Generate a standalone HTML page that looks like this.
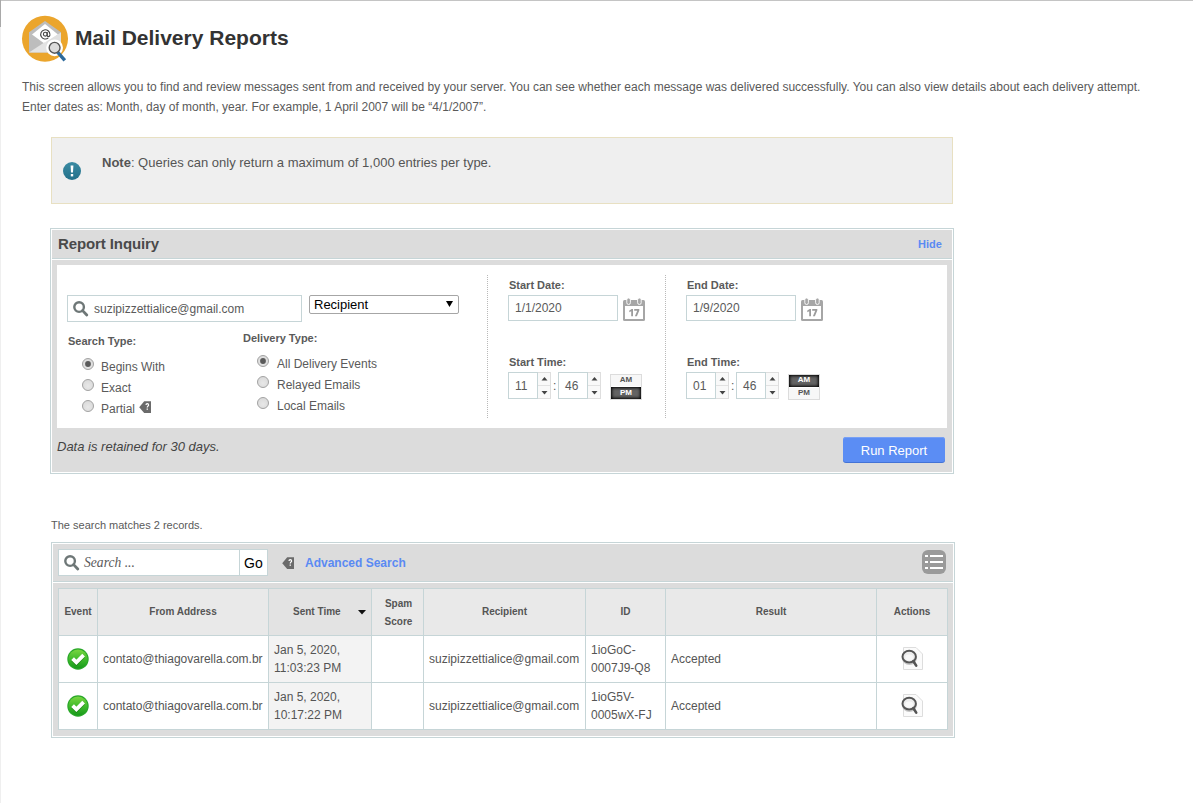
<!DOCTYPE html>
<html><head><meta charset="utf-8"><style>
html,body{margin:0;padding:0;background:#fff;width:1193px;height:803px;overflow:hidden;position:relative}
.t{position:absolute;white-space:nowrap}
.b{position:absolute;display:block}
</style></head><body>
<div class="b" style="left:0px;top:0px;width:1193px;height:1px;background:#c4c4c4"></div>
<div class="b" style="left:0px;top:0px;width:1px;height:27px;background:#a9a9a9"></div>
<div class="b" style="left:0px;top:27px;width:1px;height:776px;background:#efefef"></div>
<svg class="b" style="left:20px;top:13px" width="52" height="52" viewBox="0 0 52 52">
<circle cx="25" cy="25.8" r="23" fill="#eba52c"/>
<path d="M9 19.2 L25 8 L41 19.2 L41 39.5 L9 39.5 Z" fill="#bdbdbd"/>
<path d="M12 21.5 L25 11 L38 21.5 L25 31 Z" fill="#fff"/>
<path d="M9 39.5 L25 29 L41 39.5 Z" fill="#e3e3e3"/>
<path d="M41 19.5 L41 39.5 L25 29.2 L38 21.3 Z" fill="#e0e0e0"/>
<path d="M12 21.5 L25 31 L38 21.5 L41 19.5 L41 20.5 L25 31.5 L9 20.5 Z" fill="#fff" opacity="0.0"/>
<circle cx="25.3" cy="21.2" r="1.9" fill="none" stroke="#444" stroke-width="1.1"/>
<path d="M29.9 21.4 A4.6 4.6 0 1 0 28.3 24.9" fill="none" stroke="#444" stroke-width="1.1"/>
<path d="M27.2 19 V22.3 Q27.2 23.6 28.4 23.6 Q29.9 23.6 29.9 21.4" fill="none" stroke="#444" stroke-width="1.1"/>
<circle cx="34.6" cy="34.8" r="8.4" fill="#fff"/>
<line x1="37.6" y1="39.2" x2="44.8" y2="47.3" stroke="#2d6a9c" stroke-width="3.4" stroke-linecap="butt"/>
<circle cx="34.6" cy="34.8" r="5.4" fill="#dcdcdc" stroke="#555" stroke-width="1.4"/>
</svg>
<div class="t" style="left:75px;top:27px;font:normal bold 21px/1 'Liberation Sans';color:#333;">Mail Delivery Reports</div>
<div class="t" style="left:22px;top:81px;font:normal normal 12px/1 'Liberation Sans';color:#5a5a5a;">This screen allows you to find and review messages sent from and received by your server. You can see whether each message was delivered successfully. You can also view details about each delivery attempt.</div>
<div class="t" style="left:22px;top:101px;font:normal normal 12px/1 'Liberation Sans';color:#5a5a5a;">Enter dates as: Month, day of month, year. For example, 1 April 2007 will be &#8220;4/1/2007&#8221;.</div>
<div class="b" style="left:51px;top:137px;width:902px;height:67px;background:#efefef;border:1px solid #e8e0c2;box-sizing:border-box"></div>
<svg class="b" style="left:62px;top:161px" width="20" height="20" viewBox="0 0 20 20"><defs><linearGradient id="ng" x1="0" y1="0" x2="0" y2="1"><stop offset="0" stop-color="#3b8ba3"/><stop offset="1" stop-color="#23708a"/></linearGradient></defs>
<circle cx="10" cy="10" r="9" fill="url(#ng)"/>
<path d="M8.6 4.5 H11.4 L11 11.5 H9 Z" fill="#fff"/><rect x="8.8" y="13" width="2.4" height="2.4" fill="#fff"/></svg>
<div class="t" style="left:102px;top:156px;font:13px/1 'Liberation Sans';color:#555"><b>Note</b>: Queries can only return a maximum of 1,000 entries per type.</div>
<div class="b" style="left:50px;top:228px;width:904px;height:246px;border:1px solid #c6d5d7;box-sizing:border-box;background:#fff"></div>
<div class="b" style="left:52px;top:230px;width:900px;height:242px;background:#dcdcdc"></div>
<div class="b" style="left:52px;top:258px;width:900px;height:1px;background:#c6d5d7"></div>
<div class="b" style="left:52px;top:259px;width:900px;height:1px;background:#fff"></div>
<div class="t" style="left:58px;top:236px;font:normal bold 15px/1 'Liberation Sans';color:#4a4a4a;letter-spacing:-0.1px">Report Inquiry</div>
<div class="t" style="left:918px;top:239px;font:normal bold 11px/1 'Liberation Sans';color:#5a8af3;">Hide</div>
<div class="b" style="left:57px;top:265px;width:890px;height:163px;background:#fff"></div>
<div class="b" style="left:67px;top:295px;width:235px;height:27px;border:1px solid #c6d5d7;box-sizing:border-box;background:#fff"></div>
<svg class="b" style="left:73px;top:301px" width="16" height="16" viewBox="0 0 16 16"><circle cx="6.1" cy="6.1" r="4.8" fill="none" stroke="#6e7777" stroke-width="2.4"/><line x1="9.6" y1="9.6" x2="13.8" y2="14" stroke="#6e7777" stroke-width="2.8" stroke-linecap="round"/></svg>
<div class="t" style="left:94px;top:304px;font:normal normal 12px/1 'Liberation Sans';color:#5a5a5a;top:303px">suzipizzettialice@gmail.com</div>
<div class="b" style="left:309px;top:295px;width:150px;height:19px;border:1px solid #a6a6a6;border-radius:2px;box-sizing:border-box;background:#fff"></div>
<div class="t" style="left:314px;top:298px;font:normal normal 13px/1 'Liberation Sans';color:#000;">Recipient</div>
<svg class="b" style="left:446px;top:301px" width="7" height="6" viewBox="0 0 7 6"><path d="M0 0 H7 L3.5 6 Z" fill="#000"/></svg>
<div class="t" style="left:68px;top:336px;font:normal bold 11px/1 'Liberation Sans';color:#5a5a5a;">Search Type:</div>
<svg class="b" style="left:81px;top:357px" width="14" height="14" viewBox="0 0 14 14"><defs><radialGradient id="rg88364" cx="0.5" cy="0.6" r="0.6"><stop offset="0" stop-color="#e8e8e8"/><stop offset="1" stop-color="#d9d9d9"/></radialGradient></defs>
<circle cx="7" cy="7" r="5.5" fill="url(#rg88364)" stroke="#a3a3a3" stroke-width="1"/><circle cx="7" cy="7" r="2.9" fill="#5a5a5a"/></svg>
<svg class="b" style="left:81px;top:378px" width="14" height="14" viewBox="0 0 14 14"><defs><radialGradient id="rg88385" cx="0.5" cy="0.6" r="0.6"><stop offset="0" stop-color="#e8e8e8"/><stop offset="1" stop-color="#d9d9d9"/></radialGradient></defs>
<circle cx="7" cy="7" r="5.5" fill="url(#rg88385)" stroke="#a3a3a3" stroke-width="1"/></svg>
<svg class="b" style="left:81px;top:399px" width="14" height="14" viewBox="0 0 14 14"><defs><radialGradient id="rg88406" cx="0.5" cy="0.6" r="0.6"><stop offset="0" stop-color="#e8e8e8"/><stop offset="1" stop-color="#d9d9d9"/></radialGradient></defs>
<circle cx="7" cy="7" r="5.5" fill="url(#rg88406)" stroke="#a3a3a3" stroke-width="1"/></svg>
<div class="t" style="left:101px;top:361px;font:normal normal 12px/1 'Liberation Sans';color:#5a5a5a;">Begins With</div>
<div class="t" style="left:101px;top:382px;font:normal normal 12px/1 'Liberation Sans';color:#5a5a5a;">Exact</div>
<div class="t" style="left:101px;top:403px;font:normal normal 12px/1 'Liberation Sans';color:#5a5a5a;">Partial</div>
<svg class="b" style="left:139px;top:401px" width="12" height="12" viewBox="0 0 12 12"><path d="M0.2 6.2 L5.2 0.3 H12 V12 H5.2 Z" fill="#6b6b6b"/><path d="M6.4 4.1 Q6.4 2.1 8.3 2.1 Q10.2 2.1 10.2 3.9 Q10.2 5 9.3 5.6 Q8.9 5.9 8.9 6.6 H7.6 Q7.6 5.4 8.3 4.9 Q8.9 4.5 8.9 3.9 Q8.9 3.3 8.3 3.3 Q7.7 3.3 7.7 4.1 Z" fill="#fff"/><rect x="7.6" y="7.5" width="1.3" height="1.3" fill="#fff"/></svg>
<div class="t" style="left:243px;top:333px;font:normal bold 11px/1 'Liberation Sans';color:#5a5a5a;">Delivery Type:</div>
<svg class="b" style="left:256px;top:354px" width="14" height="14" viewBox="0 0 14 14"><defs><radialGradient id="rg263361" cx="0.5" cy="0.6" r="0.6"><stop offset="0" stop-color="#e8e8e8"/><stop offset="1" stop-color="#d9d9d9"/></radialGradient></defs>
<circle cx="7" cy="7" r="5.5" fill="url(#rg263361)" stroke="#a3a3a3" stroke-width="1"/><circle cx="7" cy="7" r="2.9" fill="#5a5a5a"/></svg>
<svg class="b" style="left:256px;top:375px" width="14" height="14" viewBox="0 0 14 14"><defs><radialGradient id="rg263382" cx="0.5" cy="0.6" r="0.6"><stop offset="0" stop-color="#e8e8e8"/><stop offset="1" stop-color="#d9d9d9"/></radialGradient></defs>
<circle cx="7" cy="7" r="5.5" fill="url(#rg263382)" stroke="#a3a3a3" stroke-width="1"/></svg>
<svg class="b" style="left:256px;top:396px" width="14" height="14" viewBox="0 0 14 14"><defs><radialGradient id="rg263403" cx="0.5" cy="0.6" r="0.6"><stop offset="0" stop-color="#e8e8e8"/><stop offset="1" stop-color="#d9d9d9"/></radialGradient></defs>
<circle cx="7" cy="7" r="5.5" fill="url(#rg263403)" stroke="#a3a3a3" stroke-width="1"/></svg>
<div class="t" style="left:277px;top:358px;font:normal normal 12px/1 'Liberation Sans';color:#5a5a5a;">All Delivery Events</div>
<div class="t" style="left:277px;top:379px;font:normal normal 12px/1 'Liberation Sans';color:#5a5a5a;">Relayed Emails</div>
<div class="t" style="left:277px;top:400px;font:normal normal 12px/1 'Liberation Sans';color:#5a5a5a;">Local Emails</div>
<div class="b" style="left:487px;top:275px;width:0;height:143px;border-left:1px dotted #b9b9b9"></div>
<div class="b" style="left:665px;top:275px;width:0;height:143px;border-left:1px dotted #b9b9b9"></div>
<div class="t" style="left:509px;top:280px;font:normal bold 11px/1 'Liberation Sans';color:#5a5a5a;">Start Date:</div>
<div class="b" style="left:508px;top:295px;width:110px;height:26px;border:1px solid #c6d5d7;box-sizing:border-box;background:#fff"></div>
<div class="t" style="left:515px;top:302px;font:normal normal 12px/1 'Liberation Sans';color:#5a5a5a;">1/1/2020</div>
<svg class="b" style="left:623px;top:298px" width="22" height="23" viewBox="0 0 22 23"><path d="M0 3.5 Q0 2 1.5 2 H20.5 Q22 2 22 3.5 V21.5 Q22 23 20.5 23 H1.5 Q0 23 0 21.5 Z" fill="#a6a6a6"/>
<rect x="2" y="8" width="18" height="13" fill="#fff"/>
<rect x="3.8" y="0" width="3.6" height="6.5" rx="1.8" fill="#a6a6a6" stroke="#fff" stroke-width="0.9"/>
<rect x="14.6" y="0" width="3.6" height="6.5" rx="1.8" fill="#a6a6a6" stroke="#fff" stroke-width="0.9"/>
<path d="M6.3 12.4 L8.7 11 H10 V18.2 H8.2 V13.3 L6.3 14.2 Z" fill="#9c9c9c"/>
<path d="M11.2 11 H16.3 V12.5 L13.9 18.2 H11.9 L14.2 12.7 H11.2 Z" fill="#9c9c9c"/></svg>
<div class="t" style="left:509px;top:357px;font:normal bold 11px/1 'Liberation Sans';color:#5a5a5a;">Start Time:</div>
<div class="b" style="left:508px;top:372px;width:30px;height:27px;border:1px solid #c6d5d7;box-sizing:border-box;background:#fff"></div>
<div class="b" style="left:538px;top:372px;width:13px;height:27px;border:1px solid #dedede;border-left:0;box-sizing:border-box;background:#f9f9f9"></div>
<div class="b" style="left:538px;top:385px;width:12px;height:1px;background:#e2e2e2"></div>
<svg class="b" style="left:541px;top:377px" width="7" height="4" viewBox="0 0 7 4"><path d="M0.5 3.5 L3.5 0 L6.5 3.5 Z" fill="#444"/></svg>
<svg class="b" style="left:541px;top:391px" width="7" height="4" viewBox="0 0 7 4"><path d="M0.5 0 L3.5 3.5 L6.5 0 Z" fill="#444"/></svg>
<div class="t" style="left:515px;top:380px;font:normal normal 12px/1 'Liberation Sans';color:#5a5a5a;">11</div>
<div class="b" style="left:558px;top:372px;width:30px;height:27px;border:1px solid #c6d5d7;box-sizing:border-box;background:#fff"></div>
<div class="b" style="left:588px;top:372px;width:13px;height:27px;border:1px solid #dedede;border-left:0;box-sizing:border-box;background:#f9f9f9"></div>
<div class="b" style="left:588px;top:385px;width:12px;height:1px;background:#e2e2e2"></div>
<svg class="b" style="left:591px;top:377px" width="7" height="4" viewBox="0 0 7 4"><path d="M0.5 3.5 L3.5 0 L6.5 3.5 Z" fill="#444"/></svg>
<svg class="b" style="left:591px;top:391px" width="7" height="4" viewBox="0 0 7 4"><path d="M0.5 0 L3.5 3.5 L6.5 0 Z" fill="#444"/></svg>
<div class="t" style="left:565px;top:380px;font:normal normal 12px/1 'Liberation Sans';color:#5a5a5a;">46</div>
<div class="t" style="left:553px;top:380px;font:normal normal 12px/1 'Liberation Sans';color:#5a5a5a;">:</div>
<div class="b" style="left:610px;top:374px;width:32px;height:26px;background:#f7f7f7;border:1px solid #dcdcdc;box-sizing:border-box"></div>
<div class="b" style="left:611px;top:386px;width:30px;height:1px;background:#fff"></div>
<div class="b" style="left:611px;top:387px;width:30px;height:12px;background:#636363;box-shadow:inset 0 0 3px 1px #000"></div>
<div class="t" style="left:610px;top:376px;width:32px;text-align:center;font:bold 8px/1 'Liberation Sans';color:#555">AM</div>
<div class="t" style="left:610px;top:389px;width:32px;text-align:center;font:bold 8px/1 'Liberation Sans';color:#fff">PM</div>
<div class="t" style="left:687px;top:280px;font:normal bold 11px/1 'Liberation Sans';color:#5a5a5a;">End Date:</div>
<div class="b" style="left:686px;top:295px;width:110px;height:26px;border:1px solid #c6d5d7;box-sizing:border-box;background:#fff"></div>
<div class="t" style="left:693px;top:302px;font:normal normal 12px/1 'Liberation Sans';color:#5a5a5a;">1/9/2020</div>
<svg class="b" style="left:801px;top:298px" width="22" height="23" viewBox="0 0 22 23"><path d="M0 3.5 Q0 2 1.5 2 H20.5 Q22 2 22 3.5 V21.5 Q22 23 20.5 23 H1.5 Q0 23 0 21.5 Z" fill="#a6a6a6"/>
<rect x="2" y="8" width="18" height="13" fill="#fff"/>
<rect x="3.8" y="0" width="3.6" height="6.5" rx="1.8" fill="#a6a6a6" stroke="#fff" stroke-width="0.9"/>
<rect x="14.6" y="0" width="3.6" height="6.5" rx="1.8" fill="#a6a6a6" stroke="#fff" stroke-width="0.9"/>
<path d="M6.3 12.4 L8.7 11 H10 V18.2 H8.2 V13.3 L6.3 14.2 Z" fill="#9c9c9c"/>
<path d="M11.2 11 H16.3 V12.5 L13.9 18.2 H11.9 L14.2 12.7 H11.2 Z" fill="#9c9c9c"/></svg>
<div class="t" style="left:687px;top:357px;font:normal bold 11px/1 'Liberation Sans';color:#5a5a5a;">End Time:</div>
<div class="b" style="left:686px;top:372px;width:30px;height:27px;border:1px solid #c6d5d7;box-sizing:border-box;background:#fff"></div>
<div class="b" style="left:716px;top:372px;width:13px;height:27px;border:1px solid #dedede;border-left:0;box-sizing:border-box;background:#f9f9f9"></div>
<div class="b" style="left:716px;top:385px;width:12px;height:1px;background:#e2e2e2"></div>
<svg class="b" style="left:719px;top:377px" width="7" height="4" viewBox="0 0 7 4"><path d="M0.5 3.5 L3.5 0 L6.5 3.5 Z" fill="#444"/></svg>
<svg class="b" style="left:719px;top:391px" width="7" height="4" viewBox="0 0 7 4"><path d="M0.5 0 L3.5 3.5 L6.5 0 Z" fill="#444"/></svg>
<div class="t" style="left:693px;top:380px;font:normal normal 12px/1 'Liberation Sans';color:#5a5a5a;">01</div>
<div class="b" style="left:736px;top:372px;width:30px;height:27px;border:1px solid #c6d5d7;box-sizing:border-box;background:#fff"></div>
<div class="b" style="left:766px;top:372px;width:13px;height:27px;border:1px solid #dedede;border-left:0;box-sizing:border-box;background:#f9f9f9"></div>
<div class="b" style="left:766px;top:385px;width:12px;height:1px;background:#e2e2e2"></div>
<svg class="b" style="left:769px;top:377px" width="7" height="4" viewBox="0 0 7 4"><path d="M0.5 3.5 L3.5 0 L6.5 3.5 Z" fill="#444"/></svg>
<svg class="b" style="left:769px;top:391px" width="7" height="4" viewBox="0 0 7 4"><path d="M0.5 0 L3.5 3.5 L6.5 0 Z" fill="#444"/></svg>
<div class="t" style="left:743px;top:380px;font:normal normal 12px/1 'Liberation Sans';color:#5a5a5a;">46</div>
<div class="t" style="left:731px;top:380px;font:normal normal 12px/1 'Liberation Sans';color:#5a5a5a;">:</div>
<div class="b" style="left:788px;top:374px;width:32px;height:26px;background:#f7f7f7;border:1px solid #dcdcdc;box-sizing:border-box"></div>
<div class="b" style="left:789px;top:375px;width:30px;height:12px;background:#636363;box-shadow:inset 0 0 3px 1px #000"></div>
<div class="b" style="left:789px;top:387px;width:30px;height:1px;background:#fff"></div>
<div class="t" style="left:788px;top:376px;width:32px;text-align:center;font:bold 8px/1 'Liberation Sans';color:#fff">AM</div>
<div class="t" style="left:788px;top:389px;width:32px;text-align:center;font:bold 8px/1 'Liberation Sans';color:#555">PM</div>
<div class="t" style="left:57px;top:440px;font:italic normal 13px/1 'Liberation Sans';color:#444;">Data is retained for 30 days.</div>
<div class="b" style="left:843px;top:437px;width:102px;height:25px;background:#5b8df4;border-radius:3px;box-shadow:0 1px 0 #4373d6, inset 0 1px 0 #77a0f5"></div>
<div class="t" style="left:843px;top:444px;width:102px;text-align:center;font:13px/1 'Liberation Sans';color:#fff">Run Report</div>
<div class="t" style="left:51px;top:520px;font:normal normal 11px/1 'Liberation Sans';color:#5a5a5a;">The search matches 2 records.</div>
<div class="b" style="left:51px;top:542px;width:904px;height:196px;border:1px solid #c6d5d7;box-sizing:border-box;background:#fff"></div>
<div class="b" style="left:53px;top:544px;width:900px;height:192px;background:#dcdcdc"></div>
<div class="b" style="left:53px;top:581px;width:900px;height:1px;background:#c6d5d7"></div>
<div class="b" style="left:53px;top:582px;width:900px;height:1px;background:#fff"></div>
<div class="b" style="left:58px;top:549px;width:210px;height:27px;border:1px solid #c6d5d7;box-sizing:border-box;background:#fff"></div>
<div class="b" style="left:239px;top:549px;width:1px;height:27px;background:#c6d5d7"></div>
<svg class="b" style="left:64px;top:555px" width="16" height="16" viewBox="0 0 16 16"><circle cx="6.1" cy="6.1" r="4.8" fill="none" stroke="#6e7777" stroke-width="2.4"/><line x1="9.6" y1="9.6" x2="13.8" y2="14" stroke="#6e7777" stroke-width="2.8" stroke-linecap="round"/></svg>
<div class="t" style="left:84px;top:556px;font:italic 13.6px/1 'Liberation Serif';color:#5a5a5a">Search ...</div>
<div class="t" style="left:244px;top:556px;font:normal normal 14px/1 'Liberation Sans';color:#000;">Go</div>
<svg class="b" style="left:282px;top:557px" width="12" height="12" viewBox="0 0 12 12"><path d="M0.2 6.2 L5.2 0.3 H12 V12 H5.2 Z" fill="#6b6b6b"/><path d="M6.4 4.1 Q6.4 2.1 8.3 2.1 Q10.2 2.1 10.2 3.9 Q10.2 5 9.3 5.6 Q8.9 5.9 8.9 6.6 H7.6 Q7.6 5.4 8.3 4.9 Q8.9 4.5 8.9 3.9 Q8.9 3.3 8.3 3.3 Q7.7 3.3 7.7 4.1 Z" fill="#fff"/><rect x="7.6" y="7.5" width="1.3" height="1.3" fill="#fff"/></svg>
<div class="t" style="left:305px;top:557px;font:normal bold 12px/1 'Liberation Sans';color:#5a8af3;">Advanced Search</div>
<svg class="b" style="left:922px;top:550px" width="24" height="24" viewBox="0 0 24 24"><rect x="0" y="0" width="24" height="24" rx="6" fill="#9a9a9a"/>
<rect x="3" y="5" width="3" height="2" fill="#fff"/><rect x="8" y="5" width="13" height="2" fill="#fff"/>
<rect x="3" y="11" width="3" height="2" fill="#fff"/><rect x="8" y="11" width="13" height="2" fill="#fff"/>
<rect x="3" y="17" width="3" height="2" fill="#fff"/><rect x="8" y="17" width="13" height="2" fill="#fff"/></svg>
<div class="b" style="left:58px;top:588px;width:890px;height:142px;background:#fff"></div>
<div class="b" style="left:59px;top:589px;width:888px;height:46px;background:#e9e9e9"></div>
<div class="b" style="left:269px;top:589px;width:102px;height:46px;background:#e3e3e3"></div>
<div class="b" style="left:269px;top:636px;width:102px;height:93px;background:#f3f3f3"></div>
<div class="b" style="left:58px;top:588px;width:1px;height:142px;background:#c6d5d7"></div>
<div class="b" style="left:97px;top:588px;width:1px;height:142px;background:#c6d5d7"></div>
<div class="b" style="left:268px;top:588px;width:1px;height:142px;background:#c6d5d7"></div>
<div class="b" style="left:371px;top:588px;width:1px;height:142px;background:#c6d5d7"></div>
<div class="b" style="left:423px;top:588px;width:1px;height:142px;background:#c6d5d7"></div>
<div class="b" style="left:585px;top:588px;width:1px;height:142px;background:#c6d5d7"></div>
<div class="b" style="left:665px;top:588px;width:1px;height:142px;background:#c6d5d7"></div>
<div class="b" style="left:876px;top:588px;width:1px;height:142px;background:#c6d5d7"></div>
<div class="b" style="left:947px;top:588px;width:1px;height:142px;background:#c6d5d7"></div>
<div class="b" style="left:58px;top:588px;width:890px;height:1px;background:#c6d5d7"></div>
<div class="b" style="left:58px;top:635px;width:890px;height:1px;background:#c6d5d7"></div>
<div class="b" style="left:58px;top:682px;width:890px;height:1px;background:#c6d5d7"></div>
<div class="b" style="left:58px;top:729px;width:890px;height:1px;background:#c6d5d7"></div>
<div class="t" style="left:59px;top:607px;width:38px;text-align:center;font:bold 10px/1 'Liberation Sans';color:#555">Event</div>
<div class="t" style="left:98px;top:607px;width:170px;text-align:center;font:bold 10px/1 'Liberation Sans';color:#555">From Address</div>
<div class="t" style="left:424px;top:607px;width:161px;text-align:center;font:bold 10px/1 'Liberation Sans';color:#555">Recipient</div>
<div class="t" style="left:586px;top:607px;width:79px;text-align:center;font:bold 10px/1 'Liberation Sans';color:#555">ID</div>
<div class="t" style="left:666px;top:607px;width:210px;text-align:center;font:bold 10px/1 'Liberation Sans';color:#555">Result</div>
<div class="t" style="left:877px;top:607px;width:70px;text-align:center;font:bold 10px/1 'Liberation Sans';color:#555">Actions</div>
<div class="t" style="left:293px;top:607px;font:bold 10px/1 'Liberation Sans';color:#555">Sent Time</div>
<svg class="b" style="left:358px;top:610px" width="8" height="5" viewBox="0 0 8 5"><path d="M0 0 H8 L4 4.5 Z" fill="#111"/></svg>
<div class="t" style="left:373px;top:595px;width:51px;text-align:center;font:bold 10px/18px 'Liberation Sans';color:#555">Spam<br>Score</div>
<svg class="b" style="left:67px;top:648px" width="22" height="22" viewBox="0 0 22 22"><defs><linearGradient id="cg0" x1="0" y1="0" x2="0" y2="1"><stop offset="0" stop-color="#7ad641"/><stop offset="0.55" stop-color="#3cb82a"/><stop offset="1" stop-color="#17991a"/></linearGradient></defs>
<circle cx="11" cy="11" r="10.7" fill="#2aa82a"/>
<circle cx="11" cy="11" r="9.6" fill="url(#cg0)"/>
<path d="M5.6 10.6 L9.4 14.4 L16.6 7.2" fill="none" stroke="#0b5e0b" stroke-opacity="0.45" stroke-width="3.8" transform="translate(0,1)"/>
<path d="M5.6 10.6 L9.4 14.4 L16.6 7.2" fill="none" stroke="#fff" stroke-width="3.8"/></svg>
<div class="t" style="left:103px;top:653px;font:12px/1 'Liberation Sans';color:#555">contato@thiagovarella.com.br</div>
<div class="t" style="left:274px;top:641px;font:12px/18px 'Liberation Sans';color:#555">Jan 5, 2020,<br>11:03:23 PM</div>
<div class="t" style="left:429px;top:653px;font:12px/1 'Liberation Sans';color:#555">suzipizzettialice@gmail.com</div>
<div class="t" style="left:591px;top:641px;font:12px/18px 'Liberation Sans';color:#555">1ioGoC-<br>0007J9-Q8</div>
<div class="t" style="left:671px;top:653px;font:12px/1 'Liberation Sans';color:#555">Accepted</div>
<svg class="b" style="left:900px;top:646px" width="24" height="24" viewBox="0 0 24 24"><path d="M3.5 1.5 H16 L22.5 8 V23.5 H3.5 Z" fill="#fbfbfb" stroke="#dddddd" stroke-width="1"/>
<ellipse cx="9.4" cy="12.2" rx="6.6" ry="6" fill="none" stroke="#c4c4c4" stroke-width="1.6"/>
<ellipse cx="9.2" cy="10.7" rx="6.7" ry="5.9" fill="#ececec" stroke="#555" stroke-width="2"/>
<ellipse cx="9.2" cy="11.5" rx="4" ry="3" fill="#f8f8f8"/>
<line x1="13.4" y1="15.2" x2="16.2" y2="19.6" stroke="#555" stroke-width="2.6" stroke-linecap="round"/></svg>
<svg class="b" style="left:67px;top:695px" width="22" height="22" viewBox="0 0 22 22"><defs><linearGradient id="cg1" x1="0" y1="0" x2="0" y2="1"><stop offset="0" stop-color="#7ad641"/><stop offset="0.55" stop-color="#3cb82a"/><stop offset="1" stop-color="#17991a"/></linearGradient></defs>
<circle cx="11" cy="11" r="10.7" fill="#2aa82a"/>
<circle cx="11" cy="11" r="9.6" fill="url(#cg1)"/>
<path d="M5.6 10.6 L9.4 14.4 L16.6 7.2" fill="none" stroke="#0b5e0b" stroke-opacity="0.45" stroke-width="3.8" transform="translate(0,1)"/>
<path d="M5.6 10.6 L9.4 14.4 L16.6 7.2" fill="none" stroke="#fff" stroke-width="3.8"/></svg>
<div class="t" style="left:103px;top:700px;font:12px/1 'Liberation Sans';color:#555">contato@thiagovarella.com.br</div>
<div class="t" style="left:274px;top:688px;font:12px/18px 'Liberation Sans';color:#555">Jan 5, 2020,<br>10:17:22 PM</div>
<div class="t" style="left:429px;top:700px;font:12px/1 'Liberation Sans';color:#555">suzipizzettialice@gmail.com</div>
<div class="t" style="left:591px;top:688px;font:12px/18px 'Liberation Sans';color:#555">1ioG5V-<br>0005wX-FJ</div>
<div class="t" style="left:671px;top:700px;font:12px/1 'Liberation Sans';color:#555">Accepted</div>
<svg class="b" style="left:900px;top:693px" width="24" height="24" viewBox="0 0 24 24"><path d="M3.5 1.5 H16 L22.5 8 V23.5 H3.5 Z" fill="#fbfbfb" stroke="#dddddd" stroke-width="1"/>
<ellipse cx="9.4" cy="12.2" rx="6.6" ry="6" fill="none" stroke="#c4c4c4" stroke-width="1.6"/>
<ellipse cx="9.2" cy="10.7" rx="6.7" ry="5.9" fill="#ececec" stroke="#555" stroke-width="2"/>
<ellipse cx="9.2" cy="11.5" rx="4" ry="3" fill="#f8f8f8"/>
<line x1="13.4" y1="15.2" x2="16.2" y2="19.6" stroke="#555" stroke-width="2.6" stroke-linecap="round"/></svg>
</body></html>
